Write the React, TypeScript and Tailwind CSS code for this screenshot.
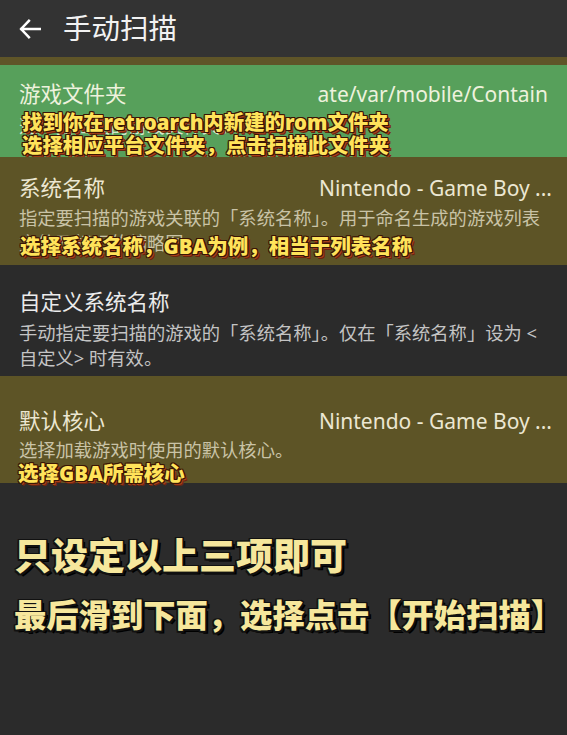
import React from "react";

const subStyle =
  "font-black text-[#ffe35a] [text-shadow:-1px_-1px_0_#3a1405,1px_-1px_0_#3a1405,-1px_1px_0_#3a1405,1px_1px_0_#3a1405,0_-1px_0_#3a1405,0_1px_0_#3a1405,-1px_0_0_#3a1405,1px_0_0_#3a1405,2px_2px_0_#a8401a,3px_3px_0_#6a2410]";

const bigStyle =
  "font-black text-[#f6e79c] [text-shadow:-1.5px_-1.5px_0_#111,1.5px_-1.5px_0_#111,-1.5px_1.5px_0_#111,1.5px_1.5px_0_#111,0_-1.5px_0_#111,0_1.5px_0_#111,-1.5px_0_0_#111,1.5px_0_0_#111,3px_3px_0_#000]";

export default function App() {
  return (
    <div className="w-[567px] h-[735px] bg-[#2b2b2b] overflow-hidden font-['Noto_Sans','Noto_Sans_CJK_SC',sans-serif]">
      {/* header */}
      <div className="h-[57px] bg-[#333333] flex items-center">
        <svg className="ml-[17px] w-[26px] h-[26px]" viewBox="0 0 24 24" fill="none" stroke="#ffffff" strokeWidth="2.3" strokeLinecap="square">
          <path d="M21 12H4M11 4.5L3.8 12l7.2 7.5" />
        </svg>
        <span className="ml-[20px] text-[28.5px] leading-none text-[#f2f2f2]">手动扫描</span>
      </div>
      <div className="h-[8px] bg-[#5f5528]" />

      {/* row 1 green */}
      <div className="relative h-[92px] bg-[#57a05b] pl-[19px] pr-[19px] pt-[15px]">
        <div className="flex justify-between items-center text-[21.5px] leading-[28px] text-[#eef2dd]">
          <span>游戏文件夹</span>
          <span className="text-[21px]">ate/var/mobile/Contain</span>
        </div>
        <div className="mt-[5px] text-[18.3px] leading-[25px] text-[#d6e6cc]">选择要扫描的游戏文件夹。</div>
        <div className={`absolute left-[22px] top-[46px] text-[20.4px] leading-[23px] ${subStyle}`}>
          <div>找到你在retroarch内新建的rom文件夹</div>
          <div>选择相应平台文件夹，点击扫描此文件夹</div>
        </div>
      </div>

      {/* row 2 olive */}
      <div className="relative h-[108px] bg-[#5d5426] pl-[19px] pr-[15px] pt-[17px]">
        <div className="flex justify-between items-center text-[21.5px] leading-[28px] text-[#ece7d2]">
          <span>系统名称</span>
          <span className="text-[21px]">Nintendo - Game Boy ...</span>
        </div>
        <div className="mt-[3px] text-[18.3px] leading-[25px] text-[#c9c3a6] whitespace-nowrap">
          <div>指定要扫描的游戏关联的「系统名称」。用于命名生成的游戏列表</div>
          <div>文件及标识的缩略图。</div>
        </div>
        <div className={`absolute left-[20px] top-[78px] text-[20.5px] leading-[23px] ${subStyle}`}>
          选择系统名称，GBA为例，相当于列表名称
        </div>
      </div>

      {/* row 3 dark */}
      <div className="h-[111px] bg-[#2b2b2b] px-[19px] pt-[23px]">
        <div className="text-[21.5px] leading-[28px] text-[#ebebeb]">自定义系统名称</div>
        <div className="mt-[4px] text-[18.3px] leading-[25px] text-[#c4c4c4]">
          <div className="whitespace-nowrap">手动指定要扫描的游戏的「系统名称」。仅在「系统名称」设为 &lt;</div>
          <div>自定义&gt; 时有效。</div>
        </div>
      </div>

      {/* row 4 olive */}
      <div className="relative z-10 h-[107px] bg-[#5d5426] pl-[19px] pr-[15px] pt-[31px]">
        <div className="flex justify-between items-center text-[21.5px] leading-[28px] text-[#ece7d2]">
          <span>默认核心</span>
          <span className="text-[21px]">Nintendo - Game Boy ...</span>
        </div>
        <div className="mt-[2px] text-[18.3px] leading-[25px] text-[#c9c3a6]">选择加载游戏时使用的默认核心。</div>
        <div className={`absolute left-[18px] top-[86px] text-[20.5px] leading-[23px] ${subStyle}`}>
          选择GBA所需核心
        </div>
      </div>

      {/* bottom */}
      <div className="pl-[14px] pt-[51px]">
        <div className={`text-[37px] leading-[44px] ${bigStyle}`}>只设定以上三项即可</div>
        <div className={`mt-[16px] text-[32.3px] leading-[40px] whitespace-nowrap ${bigStyle}`}>最后滑到下面，选择点击【开始扫描】</div>
      </div>
    </div>
  );
}
